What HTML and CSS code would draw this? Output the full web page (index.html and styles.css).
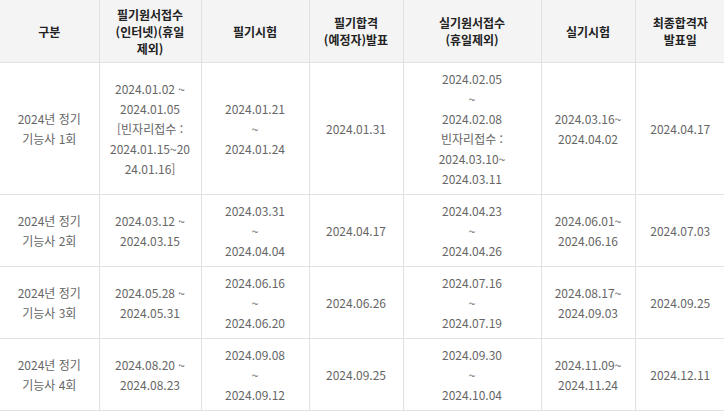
FILE: index.html
```html
<!DOCTYPE html>
<html lang="ko">
<head>
<meta charset="utf-8">
<link rel="stylesheet" href="styles.css">
</head>
<body>
<table class="sched">
<colgroup>
<col class="c1"><col class="c2"><col class="c3"><col class="c4"><col class="c5"><col class="c6"><col class="c7">
</colgroup>
<thead>
<tr>
<th>구분</th>
<th>필기원서접수<br>(인터넷)(휴일<br>제외)</th>
<th>필기시험</th>
<th>필기합격<br>(예정자)발표</th>
<th>실기원서접수<br>(휴일제외)</th>
<th>실기시험</th>
<th>최종합격자<br>발표일</th>
</tr>
</thead>
<tbody>
<tr class="tall">
<td>2024년 정기<br>기능사 1회</td>
<td>2024.01.02 ~<br>2024.01.05<br>[빈자리접수 :<br>2024.01.15~20<br>24.01.16]</td>
<td>2024.01.21<br>~<br>2024.01.24</td>
<td>2024.01.31</td>
<td>2024.02.05<br>~<br>2024.02.08<br>빈자리접수 :<br>2024.03.10~<br>2024.03.11</td>
<td>2024.03.16~<br>2024.04.02</td>
<td>2024.04.17</td>
</tr>
<tr>
<td>2024년 정기<br>기능사 2회</td>
<td>2024.03.12 ~<br>2024.03.15</td>
<td>2024.03.31<br>~<br>2024.04.04</td>
<td>2024.04.17</td>
<td>2024.04.23<br>~<br>2024.04.26</td>
<td>2024.06.01~<br>2024.06.16</td>
<td>2024.07.03</td>
</tr>
<tr>
<td>2024년 정기<br>기능사 3회</td>
<td>2024.05.28 ~<br>2024.05.31</td>
<td>2024.06.16<br>~<br>2024.06.20</td>
<td>2024.06.26</td>
<td>2024.07.16<br>~<br>2024.07.19</td>
<td>2024.08.17~<br>2024.09.03</td>
<td>2024.09.25</td>
</tr>
<tr>
<td>2024년 정기<br>기능사 4회</td>
<td>2024.08.20 ~<br>2024.08.23</td>
<td>2024.09.08<br>~<br>2024.09.12</td>
<td>2024.09.25</td>
<td>2024.09.30<br>~<br>2024.10.04</td>
<td>2024.11.09~<br>2024.11.24</td>
<td>2024.12.11</td>
</tr>
</tbody>
</table>
</body>
</html>
```
FILE: styles.css
```css
html, body {
  margin: 0;
  padding: 0;
  background: #fff;
}
.sched {
  border-collapse: collapse;
  table-layout: fixed;
  width: 725px;
  font-family: "Noto Sans CJK KR", "Noto Sans", sans-serif;
}
.c1 { width: 99px; }
.c2 { width: 102px; }
.c3 { width: 108px; }
.c4 { width: 94px; }
.c5 { width: 138px; }
.c6 { width: 94px; }
.c7 { width: 90px; }
.sched th, .sched td {
  border: 1px solid #e1e1e1;
  text-align: center;
  vertical-align: middle;
  padding: 0 2px;
}
.sched th {
  background: #f4f4f4;
  color: #222;
  font-size: 12px;
  font-weight: bold;
  line-height: 17px;
  height: 62px;
  border-top: none;
}
.sched td {
  color: #666;
  font-size: 12px;
  line-height: 20px;
  height: 71px;
}
.sched tr.tall td {
  height: 131px;
}
.sched th:first-child, .sched td:first-child { border-left: none; }
.sched th:last-child, .sched td:last-child { border-right: none; }
```
